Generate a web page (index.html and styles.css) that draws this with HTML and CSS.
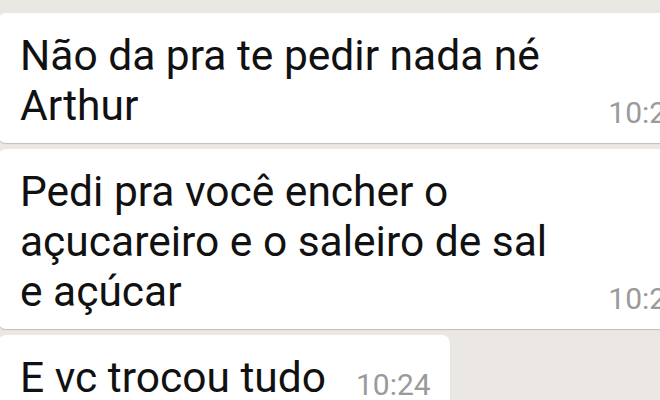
FILE: index.html
```html
<!DOCTYPE html>
<html lang="pt">
<head>
<meta charset="UTF-8">
<meta name="viewport" content="width=device-width, initial-scale=1.0">
<title>Conversa</title>
<link rel="stylesheet" href="styles.css">
</head>
<body>
<div class="chat">
  <div class="bubble wide">
    <p class="text">Não da pra te pedir nada né<br>Arthur</p>
    <span class="time">10:24</span>
  </div>
  <div class="bubble wide">
    <p class="text">Pedi pra você encher o<br>açucareiro e o saleiro de sal<br>e açúcar</p>
    <span class="time">10:24</span>
  </div>
  <div class="bubble short">
    <p class="text">E vc trocou tudo</p>
    <span class="time">10:24</span>
  </div>
</div>
</body>
</html>
```

FILE: styles.css
```css
body, html {
  margin: 0;
  height: 100%;
  overflow: hidden;
  background-color: #ebe8e3;
  font-family: Roboto, "Noto Sans", sans-serif;
}

.chat {
  display: flex;
  flex-direction: column;
  align-items: flex-start;
  gap: 6px;
  padding-top: 13px;
  margin-left: -2px;
}

.bubble {
  display: flex;
  align-items: flex-end;
  justify-content: space-between;
  background-color: #fff;
  border-radius: 8px;
  box-shadow: 0 1px 1px rgba(0, 0, 0, 0.18);
  padding: 18px 22px 12px 22px;
  box-sizing: border-box;
}

.wide {
  width: 707px;
  flex-shrink: 0;
}

.short {
  gap: 30px;
  padding-right: 19px;
}

.text {
  margin: 0;
  font-size: 42.5px;
  line-height: 50px;
  color: #111;
}

.time {
  font-size: 30px;
  line-height: 30px;
  color: #9a9a9a;
  margin-bottom: 3px;
  white-space: nowrap;
}
```
